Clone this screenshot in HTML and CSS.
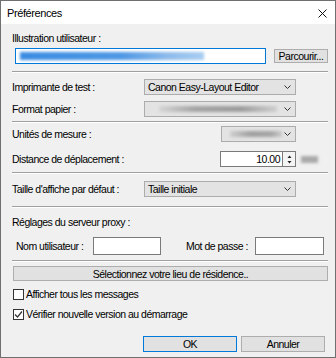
FILE: index.html
```html
<!DOCTYPE html>
<html lang="fr">
<head>
  <meta charset="UTF-8">
  <title>Préférences</title>
  <link rel="stylesheet" href="styles.css">
</head>
<body>
  <div class="dialog">
    <div class="titlebar">
      <span class="title">Préférences</span>
      <svg class="close" viewBox="0 0 9 9" width="9" height="9">
        <path d="M0.5,0.5 L8.5,8.5 M8.5,0.5 L0.5,8.5" stroke="#111" stroke-width="1" fill="none"/>
      </svg>
    </div>

    <div class="content">
      <!-- User illustration -->
      <div class="label label-illus">Illustration utilisateur :</div>
      <div class="row row-file">
        <div class="field field-file"><div class="smear smear-blue"></div></div>
        <button class="btn btn-browse">Parcourir...</button>
      </div>

      <div class="sep sep-1"></div>

      <!-- Printer -->
      <div class="row row-printer">
        <span class="label">Imprimante de test :</span>
        <div class="combo combo-wide">
          <span class="combo-text">Canon Easy-Layout Editor</span>
          <svg class="chevron" viewBox="0 0 7 4" width="7" height="4"><polyline points="0.5,0.5 3.5,3.5 6.5,0.5" fill="none" stroke="#333" stroke-width="1"/></svg>
        </div>
      </div>
      <div class="row row-paper">
        <span class="label">Format papier :</span>
        <div class="combo combo-wide">
          <div class="smear smear-paper"></div>
          <svg class="chevron" viewBox="0 0 7 4" width="7" height="4"><polyline points="0.5,0.5 3.5,3.5 6.5,0.5" fill="none" stroke="#333" stroke-width="1"/></svg>
        </div>
      </div>

      <div class="sep sep-2"></div>

      <!-- Units -->
      <div class="row row-units">
        <span class="label">Unités de mesure :</span>
        <div class="combo combo-small">
          <div class="smear smear-units"></div>
          <svg class="chevron" viewBox="0 0 7 4" width="7" height="4"><polyline points="0.5,0.5 3.5,3.5 6.5,0.5" fill="none" stroke="#333" stroke-width="1"/></svg>
        </div>
      </div>
      <div class="row row-dist">
        <span class="label">Distance de déplacement :</span>
        <div class="spinner">
          <div class="field spin-value">10.00</div>
          <div class="spin-btns">
            <svg viewBox="0 0 5 9" width="5" height="9">
              <path d="M2.5,0.5 L4.5,3 L0.5,3 Z M2.5,8.5 L4.5,6 L0.5,6 Z" fill="#222"/>
            </svg>
          </div>
        </div>
        <div class="smear smear-unit"></div>
      </div>

      <div class="sep sep-3"></div>

      <!-- Poster size -->
      <div class="row row-size">
        <span class="label">Taille d'affiche par défaut :</span>
        <div class="combo combo-wide">
          <span class="combo-text">Taille initiale</span>
          <svg class="chevron" viewBox="0 0 7 4" width="7" height="4"><polyline points="0.5,0.5 3.5,3.5 6.5,0.5" fill="none" stroke="#333" stroke-width="1"/></svg>
        </div>
      </div>

      <div class="sep sep-4"></div>

      <!-- Proxy -->
      <div class="label label-proxy">Réglages du serveur proxy :</div>
      <div class="row row-proxy">
        <span class="label proxy-user">Nom utilisateur :</span>
        <div class="field proxy-field"></div>
        <span class="label proxy-pass">Mot de passe :</span>
        <div class="field proxy-field proxy-field-2"></div>
      </div>

      <div class="sep sep-5"></div>

      <button class="btn btn-region">Sélectionnez votre lieu de résidence..</button>

      <div class="check check-1">
        <span class="box"></span>
        <span class="label">Afficher tous les messages</span>
      </div>
      <div class="check check-2">
        <span class="box">
          <svg viewBox="0 0 9 9" width="9" height="9"><polyline points="1,4.5 3.5,7 8,1.5" fill="none" stroke="#333" stroke-width="1.2"/></svg>
        </span>
        <span class="label">Vérifier nouvelle version au démarrage</span>
      </div>

      <div class="actions">
        <button class="btn btn-ok">OK</button>
        <button class="btn btn-cancel">Annuler</button>
      </div>
    </div>
  </div>
</body>
</html>
```

FILE: styles.css
```css
* { margin: 0; padding: 0; box-sizing: border-box; }
body { background: #f0f0f0; font-family: 'Liberation Sans', Arial, sans-serif; font-size: 10.5px; letter-spacing: -0.5px; color: #000; }

.dialog { width: 336px; height: 358px; border: 1px solid #707070; background: #f0f0f0; display: flex; flex-direction: column; overflow: hidden; }
.titlebar { height: 23px; background: #ffffff; display: flex; align-items: center; padding: 0 8px 0 6px; }
.title { flex: 1; font-size: 11px; letter-spacing: -0.4px; }
.close { display: block; margin-top: 1px; }

.content { display: flex; flex-direction: column; padding: 0 7px 0 11px; }
.label { line-height: 14px; white-space: nowrap; }
.row { display: flex; align-items: center; height: 16px; }

.sep { height: 2px; border-top: 1px solid #a0a0a0; border-bottom: 1px solid #ffffff; }

/* vertical rhythm */
.label-illus { margin-top: 7px; }
.row-file { margin-top: 3px; }
.sep-1 { margin-top: 7px; }
.row-printer { margin-top: 6px; }
.row-paper { margin-top: 6px; }
.sep-2 { margin-top: 4px; }
.row-units { margin-top: 3px; }
.row-dist { margin-top: 9px; }
.sep-3 { margin-top: 5px; }
.row-size { margin-top: 7px; }
.sep-4 { margin-top: 9px; }
.label-proxy { margin-top: 7px; }
.row-proxy { margin-top: 8px; height: 18px; }
.sep-5 { margin-top: 5px; }
.btn-region { margin-top: 4px; }
.check-1 { margin-top: 6px; }
.check-2 { margin-top: 6px; }
.actions { margin-top: 15px; }

/* fields */
.field { background: #ffffff; border: 1px solid #7a7a7a; height: 16px; }
.field-file { width: 251px; margin-left: 3px; border-color: #0078d7; position: relative; overflow: hidden; }

.smear { filter: blur(1.5px); }
.smear-blue { position: absolute; left: 4px; top: 3px; width: 184px; height: 8px; background: linear-gradient(to right, #3b8ce2, #4f98e4 55%, #8dbbeb 80%, #a9cdf0); }

.btn { font-family: inherit; font-size: 10.5px; letter-spacing: -0.5px; color: #000; background: #e1e1e1; border: 1px solid #adadad; line-height: 12px; cursor: default; }
.btn-browse { width: 54px; height: 14px; margin-left: 8px; }

/* combos */
.combo { margin-left: auto; margin-right: 32px; height: 16px; background: #e3e3e3; border: 1px solid #acacac; display: flex; align-items: center; padding: 0 3px; position: relative; }
.combo-wide { width: 152px; }
.combo-small { width: 75px; }
.combo-text { flex: 1; line-height: 14px; white-space: nowrap; }
.chevron { display: block; margin-left: auto; margin-right: 1px; }

.smear-paper { position: absolute; left: 14px; top: 4px; width: 118px; height: 6px; background: linear-gradient(to right, rgba(160,160,160,0.2), #a4a4a4 30%, #9c9c9c 70%, rgba(160,160,160,0.3)); }
.smear-units { position: absolute; left: 8px; top: 4px; width: 52px; height: 6px; background: linear-gradient(to right, rgba(160,160,160,0.3), #a0a0a0 40%, #a6a6a6 80%, rgba(170,170,170,0.4)); }

/* spinner */
.spinner { margin-left: auto; display: flex; height: 16px; }
.spin-value { width: 63px; text-align: right; padding-right: 2px; line-height: 14px; font-size: 10.5px; }
.spin-btns { width: 13px; height: 16px; border: 1px solid #7a7a7a; border-left: none; background: #f4f4f4; display: flex; align-items: center; justify-content: center; }
.spin-btns svg { display: block; }
.smear-unit { width: 17px; height: 7px; background: #a9a9a9; margin: 0 10px 0 5px; }

/* proxy */
.row-proxy .label { line-height: 18px; }
.proxy-user { width: 77px; margin-left: 4px; }
.proxy-field { width: 68px; height: 18px; }
.proxy-pass { width: 69px; margin-left: 25px; }
.proxy-field-2 { width: 69px; }

.btn-region { height: 15px; margin-left: 1px; width: 315px; }

/* checkboxes */
.check { display: flex; align-items: center; height: 14px; }
.box { width: 11px; height: 11px; border: 1px solid #333; background: #ffffff; display: flex; align-items: center; justify-content: center; margin-left: 1px; margin-right: 2px; }
.box svg { display: block; }

/* dialog buttons */
.actions { display: flex; justify-content: flex-end; gap: 4px; margin-right: 3px; }
.btn-ok { width: 94px; height: 16px; border-color: #0078d7; }
.btn-cancel { width: 84px; height: 16px; }
```
